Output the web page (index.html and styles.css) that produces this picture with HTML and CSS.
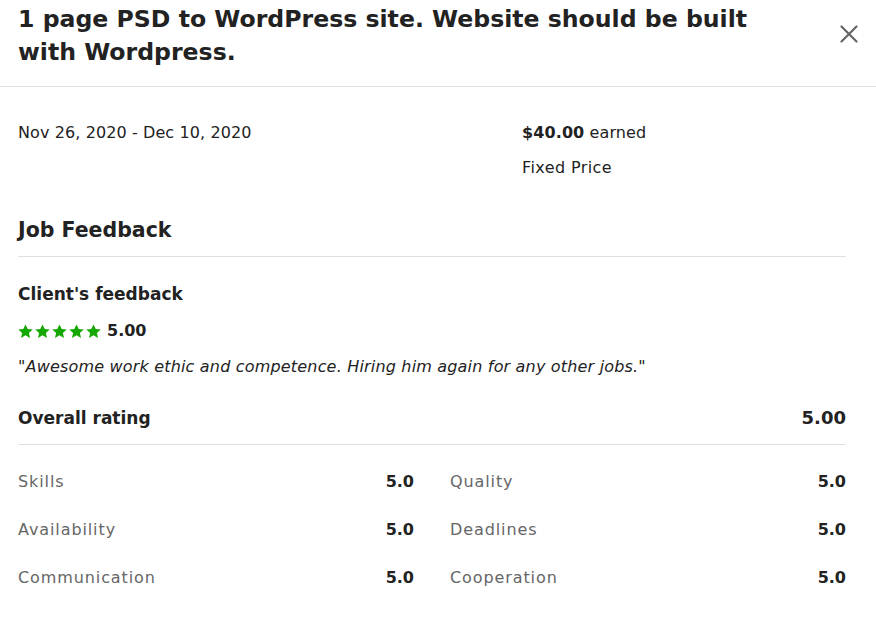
FILE: index.html
```html
<!DOCTYPE html>
<html lang="en">
<head>
<meta charset="utf-8">
<title>Job details</title>
<link rel="stylesheet" href="styles.css">
</head>
<body>
<div class="modal">
  <header class="modal-header">
    <h1 class="title">1 page PSD to WordPress site. Website should be built with Wordpress.</h1>
    <button class="close" aria-label="Close">
      <svg width="18" height="18" viewBox="0 0 18 18"><path d="M1.5 1.5 L16.5 16.5 M16.5 1.5 L1.5 16.5" stroke="#666" stroke-width="2.2" stroke-linecap="round" fill="none"/></svg>
    </button>
  </header>
  <div class="modal-body">
    <div class="meta">
      <div class="meta-dates">Nov 26, 2020 - Dec 10, 2020</div>
      <div class="meta-price">
        <div><strong>$40.00</strong> earned</div>
        <div class="price-type">Fixed Price</div>
      </div>
    </div>
    <h2 class="section-title">Job Feedback</h2>
    <h3 class="sub-title">Client's feedback</h3>
    <div class="stars-row">
      <span class="stars">
        <svg width="83" height="15" viewBox="0 0 83 15">
          <defs><path id="s" d="M7.5 0.4 L9.7 5.0 L14.7 5.5 L10.9 8.9 L12.0 13.9 L7.5 11.3 L3.0 13.9 L4.1 8.9 L0.3 5.5 L5.3 5.0 Z"/></defs>
          <use href="#s" x="0" fill="#14a800"/>
          <use href="#s" x="17" fill="#14a800"/>
          <use href="#s" x="34" fill="#14a800"/>
          <use href="#s" x="51" fill="#14a800"/>
          <use href="#s" x="68" fill="#14a800"/>
        </svg>
      </span>
      <strong class="score">5.00</strong>
    </div>
    <p class="quote">"Awesome work ethic and competence. Hiring him again for any other jobs."</p>
    <div class="overall">
      <span>Overall rating</span>
      <span class="overall-val">5.00</span>
    </div>
    <div class="ratings">
      <div class="rating"><span class="label">Skills</span><span class="val">5.0</span></div>
      <div class="rating"><span class="label">Quality</span><span class="val">5.0</span></div>
      <div class="rating"><span class="label">Availability</span><span class="val">5.0</span></div>
      <div class="rating"><span class="label">Deadlines</span><span class="val">5.0</span></div>
      <div class="rating"><span class="label">Communication</span><span class="val">5.0</span></div>
      <div class="rating"><span class="label">Cooperation</span><span class="val">5.0</span></div>
    </div>
  </div>
</div>
</body>
</html>
```
FILE: styles.css
```css
* { box-sizing: border-box; }
body {
  margin: 0;
  background: #fff;
  font-family: "DejaVu Sans", "Liberation Sans", sans-serif;
  color: #222;
}
.modal { width: 876px; }
.modal-header {
  display: flex;
  align-items: flex-start;
  justify-content: space-between;
  padding: 3px 18px 0 18px;
  height: 87px;
  border-bottom: 1px solid #e0e0e0;
}
.title {
  margin: 0;
  font-size: 23.6px;
  font-weight: 700;
  line-height: 33px;
  width: 760px;
}
.close {
  margin-top: 22px;
  background: none;
  border: 0;
  padding: 0;
  width: 18px;
  height: 18px;
  cursor: pointer;
}
.close svg { display: block; }
.modal-body { padding: 0 30px 0 18px; }
.meta {
  display: flex;
  padding-top: 35px;
  font-size: 16px;
  line-height: 22px;
  letter-spacing: 0.1px;
}
.meta-dates { width: 504px; }
.price-type { margin-top: 13px; letter-spacing: 0.4px; }
.section-title {
  margin: 37px 0 0;
  font-size: 20.5px;
  font-weight: 700;
  line-height: 28px;
  padding-bottom: 12px;
  border-bottom: 1px solid #e0e0e0;
}
.sub-title {
  margin: 24px 0 0;
  font-size: 17px;
  font-weight: 700;
  line-height: 26px;
}
.stars-row {
  display: flex;
  align-items: center;
  gap: 6px;
  margin-top: 13px;
}
.stars svg { display: block; }
.score { font-size: 16px; line-height: 22px; }
.quote {
  margin: 14px 0 0;
  font-style: italic;
  font-size: 16px;
  line-height: 22px;
  letter-spacing: 0.18px;
}
.overall {
  display: flex;
  justify-content: space-between;
  margin-top: 27px;
  font-size: 17px;
  font-weight: 700;
  line-height: 26px;
  padding-bottom: 13px;
  border-bottom: 1px solid #e0e0e0;
}
.overall-val { font-size: 18px; }
.ratings {
  display: grid;
  grid-template-columns: 1fr 1fr;
  column-gap: 36px;
  row-gap: 26px;
  padding-top: 26px;
}
.rating {
  display: flex;
  justify-content: space-between;
  font-size: 16px;
  line-height: 22px;
}
.label { color: #666; letter-spacing: 0.9px; }
.val { font-weight: 700; font-size: 16px; }
```
